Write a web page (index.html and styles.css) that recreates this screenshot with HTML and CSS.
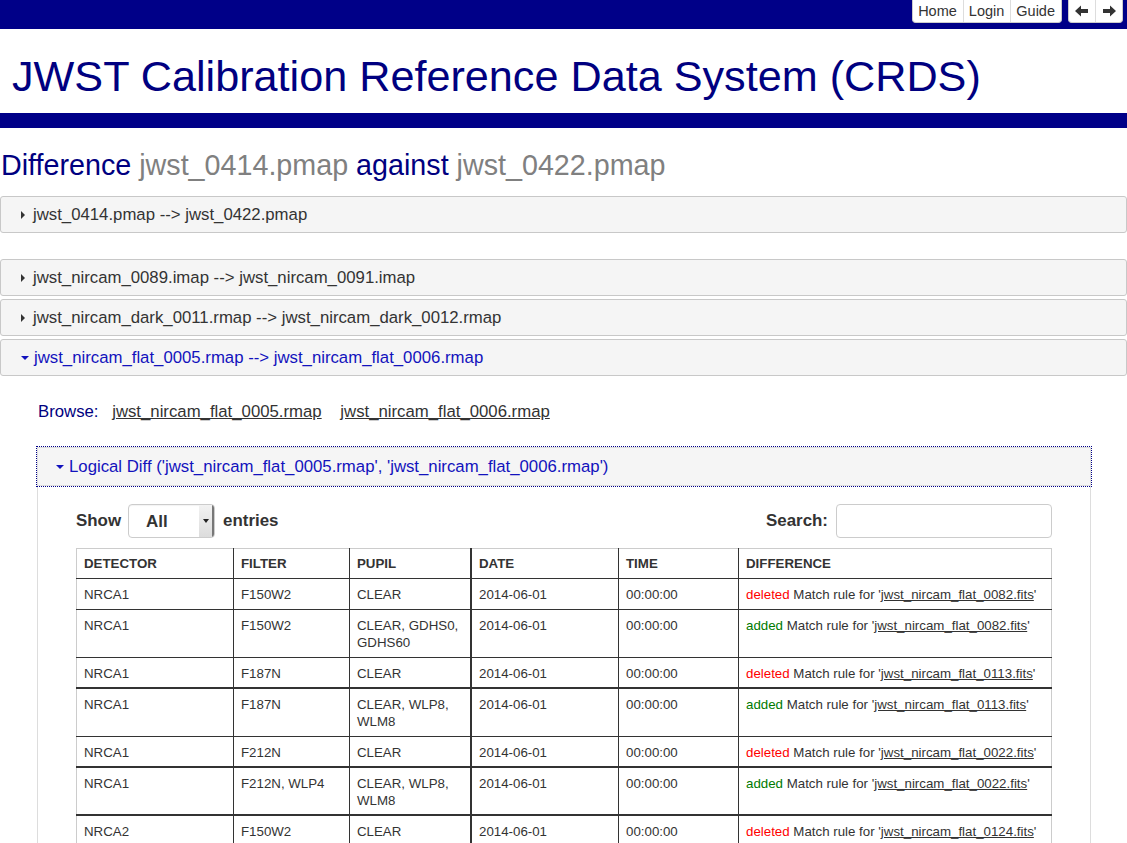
FILE: index.html
```html
<!DOCTYPE html>
<html>
<head>
<meta charset="utf-8">
<title>CRDS Difference</title>
<link rel="stylesheet" href="styles.css">
</head>
<body>
<div class="topbar">
  <div class="btn-group">
    <span class="btn">Home</span><span class="btn">Login</span><span class="btn">Guide</span>
  </div>
  <div class="btn-group">
    <span class="btn arrow"><svg width="14" height="12" viewBox="0 0 14 12"><path d="M0 6 L6 0.5 L6 4 L13 4 L13 8 L6 8 L6 11.5 Z" fill="#333"/></svg></span><span class="btn arrow"><svg width="14" height="12" viewBox="0 0 14 12"><path d="M14 6 L8 0.5 L8 4 L1 4 L1 8 L8 8 L8 11.5 Z" fill="#333"/></svg></span>
  </div>
</div>
<h1 class="title">JWST Calibration Reference Data System (CRDS)</h1>
<div class="navyrule"></div>

<h2 class="diffhead">Difference <span class="grey">jwst_0414.pmap</span> against <span class="grey">jwst_0422.pmap</span></h2>

<div class="acc-head"><span class="tri-right"></span>jwst_0414.pmap --&gt; jwst_0422.pmap</div>

<div class="acc-list">
  <div class="acc-head"><span class="tri-right"></span>jwst_nircam_0089.imap --&gt; jwst_nircam_0091.imap</div>
  <div class="acc-head"><span class="tri-right"></span>jwst_nircam_dark_0011.rmap --&gt; jwst_nircam_dark_0012.rmap</div>
  <div class="acc-head active"><span class="tri-down"></span>jwst_nircam_flat_0005.rmap --&gt; jwst_nircam_flat_0006.rmap</div>
  <div class="acc-body">
    <div class="browse">Browse: <a class="lnk first">jwst_nircam_flat_0005.rmap</a> <a class="lnk">jwst_nircam_flat_0006.rmap</a></div>
    <div class="ld-head"><span class="tri-down"></span>Logical Diff ('jwst_nircam_flat_0005.rmap', 'jwst_nircam_flat_0006.rmap')</div>
    <div class="ld-body">
      <div class="controls">
        <div class="show">Show <span class="select"><span class="sel-val">All</span><span class="sel-btn"><span class="sel-caret"></span></span></span> entries</div>
        <div class="search">Search: <span class="input"></span></div>
      </div>
      <table class="dt">
        <thead>
          <tr><th class="c1">DETECTOR</th><th class="c2">FILTER</th><th class="c3">PUPIL</th><th class="c4 thick-l">DATE</th><th class="c5">TIME</th><th class="c6">DIFFERENCE</th></tr>
        </thead>
        <tbody>
          <tr><td>NRCA1</td><td>F150W2</td><td>CLEAR</td><td class="thick-l">2014-06-01</td><td>00:00:00</td><td><span class="del">deleted</span> Match rule for '<a class="lnk">jwst_nircam_flat_0082.fits</a>'</td></tr>
          <tr><td>NRCA1</td><td>F150W2</td><td>CLEAR, GDHS0,<br>GDHS60</td><td class="thick-l">2014-06-01</td><td>00:00:00</td><td><span class="add">added</span> Match rule for '<a class="lnk">jwst_nircam_flat_0082.fits</a>'</td></tr>
          <tr class="thick-b"><td>NRCA1</td><td>F187N</td><td>CLEAR</td><td class="thick-l">2014-06-01</td><td>00:00:00</td><td><span class="del">deleted</span> Match rule for '<a class="lnk">jwst_nircam_flat_0113.fits</a>'</td></tr>
          <tr><td>NRCA1</td><td>F187N</td><td>CLEAR, WLP8,<br>WLM8</td><td class="thick-l">2014-06-01</td><td>00:00:00</td><td><span class="add">added</span> Match rule for '<a class="lnk">jwst_nircam_flat_0113.fits</a>'</td></tr>
          <tr class="thick-b"><td>NRCA1</td><td>F212N</td><td>CLEAR</td><td class="thick-l">2014-06-01</td><td>00:00:00</td><td><span class="del">deleted</span> Match rule for '<a class="lnk">jwst_nircam_flat_0022.fits</a>'</td></tr>
          <tr class="thick-b"><td>NRCA1</td><td>F212N, WLP4</td><td>CLEAR, WLP8,<br>WLM8</td><td class="thick-l">2014-06-01</td><td>00:00:00</td><td><span class="add">added</span> Match rule for '<a class="lnk">jwst_nircam_flat_0022.fits</a>'</td></tr>
          <tr><td>NRCA2</td><td>F150W2</td><td>CLEAR</td><td class="thick-l">2014-06-01</td><td>00:00:00</td><td><span class="del">deleted</span> Match rule for '<a class="lnk">jwst_nircam_flat_0124.fits</a>'</td></tr>
        </tbody>
      </table>
    </div>
  </div>
</div>
</body>
</html>
```

FILE: styles.css
```css
html, body {
  margin: 0;
  padding: 0;
  background: #fff;
  font-family: "Liberation Sans", Arial, Helvetica, sans-serif;
  color: #333;
  overflow: hidden;
}

.topbar {
  height: 29px;
  background: #000088;
  display: flex;
  justify-content: flex-end;
  align-items: flex-start;
  gap: 6px;
  padding-right: 4px;
}

.btn-group {
  display: flex;
  background: #fff;
  border: 1px solid #ccc;
  border-top: none;
  border-radius: 0 0 4px 4px;
  height: 22px;
}

.btn {
  display: flex;
  align-items: center;
  padding: 0 6px 0 5px;
  font-size: 14.5px;
  color: #333;
  border-left: 1px solid #ddd;
  line-height: 22px;
}

.btn:first-child {
  border-left: none;
}

.btn.arrow {
  width: 15px;
  justify-content: center;
}

.title {
  margin: 0;
  padding: 21px 0 0 12px;
  height: 63px;
  font-size: 43.2px;
  font-weight: normal;
  color: #000080;
  line-height: 52px;
}

.navyrule {
  height: 15px;
  background: #000088;
}

.diffhead {
  margin: 0;
  padding: 21px 0 0 1px;
  height: 47px;
  font-size: 28.7px;
  font-weight: normal;
  color: #000080;
  line-height: 33px;
}

.grey {
  color: #808080;
}

.acc-head {
  border: 1px solid #c8c8c8;
  border-radius: 3px;
  background: #f5f5f5;
  height: 35px;
  line-height: 35px;
  font-size: 16.75px;
  color: #333;
  padding-left: 20px;
  display: flex;
  align-items: center;
  margin-bottom: 26px;
}

.acc-list .acc-head {
  margin-bottom: 3px;
}

.acc-head.active {
  color: #1212bd;
  margin-bottom: 0;
}

.tri-right {
  display: inline-block;
  width: 0;
  height: 0;
  border-top: 4px solid transparent;
  border-bottom: 4px solid transparent;
  border-left: 4px solid #333;
  margin-right: 8px;
}

.tri-down {
  display: inline-block;
  width: 0;
  height: 0;
  border-left: 4px solid transparent;
  border-right: 4px solid transparent;
  border-top: 4px solid #1212bd;
  margin-right: 5px;
}

.acc-body {
  padding-top: 26px;
}

.browse {
  padding-left: 38px;
  font-size: 16.75px;
  color: #000080;
  height: 45px;
  line-height: 20px;
  word-spacing: 9px;
}

.lnk {
  color: #333;
  text-decoration: underline;
  word-spacing: 0;
}

.lnk.first {
  margin-right: 5px;
}

.ld-head {
  margin: 0 36px 0 37px;
  height: 37px;
  border: 1px solid #ddd;
  background: #f5f5f5;
  outline: 1px dotted #000088;
  font-size: 16.75px;
  color: #1212bd;
  display: flex;
  align-items: center;
  padding-left: 18px;
}

.ld-body {
  margin: 0 36px 0 37px;
  border-left: 1px solid #ddd;
  border-right: 1px solid #ddd;
  padding: 18px 38px 0 38px;
  height: 400px;
}

.controls {
  display: flex;
  justify-content: space-between;
  align-items: center;
  height: 34px;
  margin-bottom: 10px;
}

.show, .search {
  display: flex;
  align-items: center;
  font-size: 16.9px;
  font-weight: bold;
  color: #333;
}

.select {
  display: flex;
  width: 85px;
  height: 32px;
  border: 1px solid #ccc;
  border-radius: 4px;
  margin: 0 8px 0 7px;
  overflow: hidden;
  box-shadow: inset 0 1px 1px rgba(0,0,0,0.05);
}

.sel-val {
  flex: 1;
  padding-left: 17px;
  line-height: 34px;
  font-size: 17px;
}

.sel-btn {
  width: 13px;
  background: linear-gradient(#f2f2f2, #dcdcdc);
  border-right: 2px solid #777;
  display: flex;
  align-items: center;
  justify-content: center;
}

.sel-caret {
  width: 0;
  height: 0;
  border-left: 3px solid transparent;
  border-right: 3px solid transparent;
  border-top: 4px solid #222;
}

.input {
  display: inline-block;
  width: 214px;
  height: 32px;
  border: 1px solid #ccc;
  border-radius: 4px;
  margin-left: 8px;
}

.dt {
  border-collapse: collapse;
  width: 976px;
  font-size: 13.3px;
  color: #333;
  border: 1px solid #ccc;
}

.dt th, .dt td {
  border-left: 1px solid #333;
  border-bottom: 1px solid #333;
  text-align: left;
  vertical-align: top;
  padding: 7px 7px 6px 7px;
  line-height: 17px;
}

.dt th {
  padding-top: 6px;
  font-weight: bold;
}

.dt th:first-child, .dt td:first-child {
  border-left: 1px solid #ccc;
}

.dt .thick-l {
  border-left: 2px solid #333;
}

.dt tr.thick-b td {
  border-bottom: 2px solid #333;
  padding-bottom: 5px;
}

.c1 { width: 142px; }
.c2 { width: 101px; }
.c3 { width: 106px; }
.c4 { width: 132px; }
.c5 { width: 105px; }

.del { color: #ff0000; }
.add { color: #007a00; }
```
